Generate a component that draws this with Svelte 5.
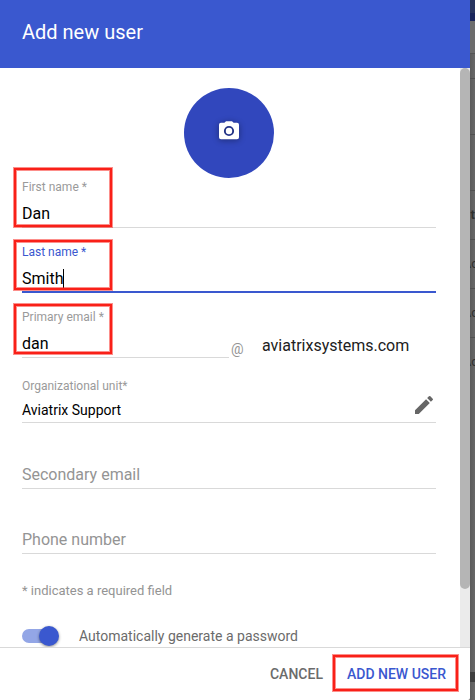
<script>
  const people = [
    { top: 205, text: 't', bold: true },
    { top: 254, text: 'Ac' },
    { top: 303, text: 'Ac' },
    { top: 352, text: 'Ac' }
  ];
  const rules = [78, 134, 190, 239, 288, 337];
</script>

<div class="screen">
  <div class="backdrop">
    <div class="nav"></div>
    <div class="subnav"></div>
    <div class="toolbar"></div>
    {#each rules as y}
      <div class="rule" style="top: {y}px"></div>
    {/each}
    {#each people as p}
      <span class="peek" class:bold={p.bold} style="top: {p.top}px">{p.text}</span>
    {/each}
    <div class="band"></div>
  </div>

  <section class="dialog">
    <header><h1>Add new user</h1></header>

    <div class="body">
      <form>
        <button class="avatar" type="button" aria-label="Add photo">
          <svg viewBox="0 0 24 24" width="24" height="24">
            <path fill="#fff" fill-rule="evenodd" d="M9 2.2 7.4 3.8H4a2 2 0 0 0-2 2v12.4a2 2 0 0 0 2 2h16a2 2 0 0 0 2-2V5.800a2 2 0 0 0-2-2h-3.400L15 2.200zM12 6.900a5.100 5.100 0 1 1 0 10.200 5.100 5.100 0 0 1 0-10.200zm0 1.900a3.200 3.200 0 1 0 0 6.400 3.200 3.200 0 0 0 0-6.400z" />
          </svg>
        </button>

        <div class="field first">
          <span class="label">First name *</span>
          <span class="value">Dan</span>
          <i class="mark m1"></i>
        </div>
        <div class="field focused">
          <span class="label">Last name *</span>
          <span class="value">Smith<b class="caret"></b></span>
          <i class="mark m2"></i>
        </div>
        <div class="emailrow">
          <div class="field email">
            <span class="label primary">Primary email *</span>
            <span class="value">dan</span>
            <i class="mark m3"></i>
          </div>
          <span class="at">@</span>
          <span class="domain">aviatrixsystems.com</span>
        </div>
        <div class="field org">
          <span class="label">Organizational unit*</span>
          <span class="value small">Aviatrix Support</span>
          <svg class="pencil" viewBox="0 0 24 24" width="24" height="24">
            <path fill="#666" d="M3 17.25V21h3.75L17.81 9.94l-3.75-3.75L3 17.25zM20.71 7.04a1 1 0 0 0 0-1.41l-2.34-2.34a1 1 0 0 0-1.41 0l-1.83 1.83 3.75 3.75 1.83-1.83z" />
          </svg>
        </div>
        <div class="field empty second"><span class="value">Secondary email</span></div>
        <div class="field empty"><span class="value">Phone number</span></div>
        <p class="note">* indicates a required field</p>
        <div class="auto">
          <span class="track"><span class="knob"></span></span>
          <span class="autotext">Automatically generate a password</span>
        </div>
      </form>
      <div class="scrollbar"><div class="thumb"></div></div>
    </div>

    <footer>
      <span class="cancel">CANCEL</span>
      <span class="add">ADD NEW USER</span>
      <i class="mark m4"></i>
    </footer>
  </section>
</div>

<style>
  :global(body) { margin: 0; overflow: hidden; }
  .screen {
    position: relative;
    width: 475px;
    height: 700px;
    overflow: hidden;
    font-family: Roboto, "Liberation Sans", sans-serif;
    background: #656565;
  }
  .screen * { box-sizing: border-box; }
  .backdrop {
    position: absolute;
    top: 0;
    left: 470px;
    width: 5px;
    height: 700px;
    overflow: hidden;
    background: linear-gradient(90deg, #5b5b5b, #686868);
  }
  .nav { height: 13px; background: #27345f; }
  .subnav { height: 8px; background: #19255c; }
  .toolbar { height: 33px; background: #6c6c6c; border-bottom: 1px solid #555; }
  .rule { position: absolute; left: 0; width: 5px; height: 1px; background: #505050; }
  .peek {
    position: absolute;
    right: -3px;
    font-size: 13px;
    line-height: 20px;
    color: #303030;
  }
  .peek.bold { right: 0; font-weight: 700; }
  .band { position: absolute; top: 672px; left: 0; width: 5px; height: 10px; background: #3e3e3e; }

  .dialog {
    position: relative;
    display: flex;
    flex-direction: column;
    width: 470px;
    height: 700px;
    background: #fff;
    border-bottom-right-radius: 2px;
  }
  header {
    flex: none;
    height: 68px;
    padding: 20px 22px 0;
    background: #3a58cf;
  }
  h1 {
    margin: 0;
    font-size: 20px;
    line-height: 24px;
    font-weight: 400;
    color: #fff;
  }
  .body { display: flex; flex: none; height: 579px; overflow: hidden; }
  form { display: flex; flex-direction: column; width: 460px; padding: 20px 24px 0 22px; }
  .avatar {
    display: flex;
    flex: none;
    align-items: center;
    justify-content: center;
    align-self: center;
    width: 90px;
    height: 90px;
    padding: 0 0 4px;
    border: 0;
    border-radius: 50%;
    background: #3147bd;
  }
  .avatar svg { filter: drop-shadow(0 1px 3px rgba(0, 0, 0, 0.4)); }
  .field {
    position: relative;
    display: flex;
    flex: none;
    flex-direction: column;
    justify-content: flex-end;
    height: 65px;
    padding-bottom: 1px;
    border-bottom: 1px solid #d9d9d9;
    white-space: nowrap;
  }
  .first { height: 50px; }
  .label { font-size: 12px; line-height: 16px; margin-bottom: 7px; color: #9a9a9a; }
  .value { font-size: 16px; line-height: 24px; color: #000; }
  .focused { padding-bottom: 0; border-bottom: 2px solid #3a58cf; }
  .focused .label { color: #3a58cf; }
  .caret { display: inline-block; width: 1px; height: 19px; vertical-align: -4px; background: #000; }
  .emailrow { display: flex; height: 65px; align-items: flex-end; }
  .email { width: 207px; }
  .at { width: 33px; padding-left: 2px; font-size: 14px; line-height: 18px; color: #949494; }
  .domain { font-size: 16px; line-height: 24px; color: #212121; }
  .value.small { font-size: 14px; line-height: 20px; }
  .org { padding-bottom: 2px; }
  .org .label { margin-bottom: 6px; }
  .pencil { position: absolute; right: 0; bottom: 5px; }
  .second { height: 66px; }
  .empty .value { color: #949494; }
  .note { margin: 28px 0 0; font-size: 13px; line-height: 18px; color: #949494; white-space: nowrap; }
  .auto { display: flex; align-items: center; height: 24px; margin-top: 24px; }
  .track {
    position: relative;
    width: 36px;
    height: 14px;
    border-radius: 7px;
    background: #93a6e6;
  }
  .knob {
    position: absolute;
    top: -3px;
    right: -1px;
    width: 20px;
    height: 20px;
    border-radius: 50%;
    background: #3a58cf;
    box-shadow: 0 1px 3px rgba(0, 0, 0, 0.45);
  }
  .autotext { margin-left: 21px; font-size: 14px; line-height: 20px; color: #6b6b6b; white-space: nowrap; }
  .scrollbar { width: 10px; height: 579px; background: #ebebeb; }
  .thumb { height: 521px; border-radius: 5px; background: #b5b5b5; }
  footer {
    position: relative;
    display: flex;
    flex: 1;
    justify-content: flex-end;
    padding: 16px 24px 0 0;
    border-top: 1px solid #d9d9d9;
    font-size: 14px;
    line-height: 20px;
    font-weight: 500;
    white-space: nowrap;
  }
  .cancel { margin-right: 24px; color: #6b6b6b; }
  .add { color: #3a58cf; }
  .mark {
    position: absolute;
    z-index: 1;
    border: 2px solid #f92018;
    box-shadow: 0 0 0 1px rgba(249, 32, 24, 0.5), inset 0 0 0 1px rgba(249, 32, 24, 0.5);
    pointer-events: none;
  }
  .m1 { left: -8px; top: -10px; width: 98px; height: 59px; }
  .m2 { left: -8px; top: 12px; width: 98px; height: 50px; }
  .m3 { left: -8px; top: 11px; width: 98px; height: 50px; }
  .m4 { left: 333px; top: 7px; width: 125px; height: 36px; }
</style>
